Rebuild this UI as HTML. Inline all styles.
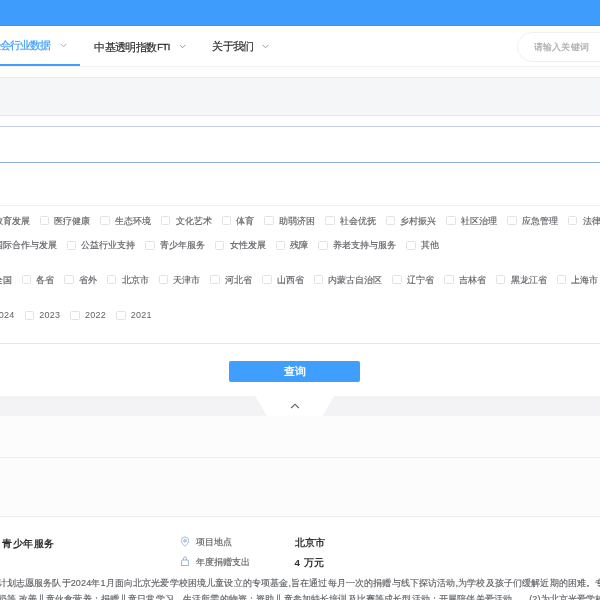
<!DOCTYPE html>
<html><head><meta charset="utf-8">
<style>
*{margin:0;padding:0;box-sizing:border-box}
html,body{width:600px;height:600px;overflow:hidden;background:#fff;font-family:"Liberation Sans",sans-serif;color:#303133}
body{filter:blur(0.3px)}
.abs{position:absolute}
#topbar{left:0;top:0;width:600px;height:25.8px;background:linear-gradient(#3e9cfd 24.5px,#3a90e8 25.8px)}
#nav{left:0;top:25.8px;width:600px;height:40.5px;background:#fff}
#navshadow{left:0;top:66px;width:600px;height:11px;background:linear-gradient(#efeff1,#fdfdfd 1.5px,#fefefe)}
.navi{font-size:10.5px;line-height:14px;letter-spacing:-0.6px;white-space:nowrap;color:#303133;-webkit-text-stroke:0.2px}
.chev{display:inline-block;width:4px;height:4px;border-right:1px solid #909399;border-bottom:1px solid #909399;transform:rotate(45deg);margin-left:9px;position:relative;top:-3px}
#underline{left:0;top:64.3px;width:80px;height:1.7px;background:#409eff}
#search{left:516.5px;top:31.7px;width:120px;height:30px;border:1px solid #efefef;border-radius:15px;background:#fff}
#search span{position:absolute;left:16px;top:8.2px;font-size:9.3px;line-height:12px;letter-spacing:0.3px;color:#a4a6ab;white-space:nowrap;-webkit-text-stroke:0.15px #a4a6ab}
#band1{left:0;top:77px;width:600px;height:38.5px;background:#f5f6f8;border-top:1px solid #ececee;border-bottom:1px solid #e6e6e8}
#input{left:-10px;top:126px;width:620px;height:37px;border:1px solid #c6d2ee;border-bottom-color:#8fb0d8;background:#fff}
.row{position:absolute;white-space:nowrap;font-size:9px;line-height:12px;color:#606266;display:flex;align-items:center;-webkit-text-stroke:0.15px #606266}
.cb{display:inline-flex;align-items:center;margin-right:10.02px}
.cb i{display:inline-block;width:9.5px;height:9px;border:1px solid #e0e2e7;border-radius:1.5px;margin-right:5.2px;background:#fff}
#sep{left:0;top:342.8px;width:600px;height:1px;background:#e6e6e9}
#btn{left:229.3px;top:361.3px;width:131.2px;height:20.3px;background:#409eff;border-radius:2px;color:#fff;font-weight:bold;font-size:10.5px;letter-spacing:-0.5px;text-align:center;line-height:20px}
#band2{left:0;top:395.6px;width:600px;height:20.2px;background:#f3f2f5}
#area{left:0;top:415.7px;width:600px;height:100.5px;background:#fcfcfd}
#line2{left:0;top:457px;width:600px;height:1px;background:#eeedf1}
#line3{left:0;top:515.7px;width:600px;height:1px;background:#eeedf1}
.t{position:absolute;white-space:nowrap}
</style></head><body>
<div id="topbar" class="abs"></div>
<div id="nav" class="abs"></div>
<div id="navshadow" class="abs"></div>
<div class="abs navi" style="left:-10.4px;top:38.2px;letter-spacing:-0.85px;color:#409eff;-webkit-text-stroke:0.2px #409eff">社会行业数据</div>
<svg class="abs" style="left:60px;top:43px" width="8" height="5"><polyline points="0.8,1 3.55,3.8 6.3,1" fill="none" stroke="#a0a4ac" stroke-width="0.9"/></svg>
<div class="abs navi" style="left:94.3px;top:39.5px">中基透明指数<span style="letter-spacing:-0.3px;font-size:9px;margin-left:0.6px;position:relative;top:-0.6px;-webkit-text-stroke:0.35px #303133">FTI</span></div>
<svg class="abs" style="left:179.3px;top:44px" width="8" height="5"><polyline points="0.8,1 3.55,3.8 6.3,1" fill="none" stroke="#8a8e96" stroke-width="0.9"/></svg>
<div class="abs navi" style="left:212.3px;top:39.4px">关于我们</div>
<svg class="abs" style="left:262px;top:43.8px" width="8" height="5"><polyline points="0.8,1 3.55,3.8 6.3,1" fill="none" stroke="#8a8e96" stroke-width="0.9"/></svg>
<div id="underline" class="abs"></div>
<div id="search" class="abs"><span>请输入关键词</span></div>
<div id="band1" class="abs"></div>
<div id="input" class="abs"></div>

<div class="row" style="left:-21.2px;top:214.6px">
<span class="cb"><i></i>教育发展</span><span class="cb"><i></i>医疗健康</span><span class="cb"><i></i>生态环境</span><span class="cb"><i></i>文化艺术</span><span class="cb"><i></i>体育</span><span class="cb"><i></i>助弱济困</span><span class="cb"><i></i>社会优抚</span><span class="cb"><i></i>乡村振兴</span><span class="cb"><i></i>社区治理</span><span class="cb"><i></i>应急管理</span><span class="cb"><i></i>法律服务</span>
</div>
<div class="row" style="left:-21.2px;top:239.2px">
<span class="cb"><i></i>国际合作与发展</span><span class="cb"><i></i>公益行业支持</span><span class="cb"><i></i>青少年服务</span><span class="cb"><i></i>女性发展</span><span class="cb"><i></i>残障</span><span class="cb"><i></i>养老支持与服务</span><span class="cb"><i></i>其他</span>
</div>
<div class="row" style="left:-21.2px;top:273.6px">
<span class="cb"><i></i>全国</span><span class="cb"><i></i>各省</span><span class="cb"><i></i>省外</span><span class="cb"><i></i>北京市</span><span class="cb"><i></i>天津市</span><span class="cb"><i></i>河北省</span><span class="cb"><i></i>山西省</span><span class="cb"><i></i>内蒙古自治区</span><span class="cb"><i></i>辽宁省</span><span class="cb"><i></i>吉林省</span><span class="cb"><i></i>黑龙江省</span><span class="cb"><i></i>上海市</span><span class="cb"><i></i>江苏省</span>
</div>
<div class="row" style="left:-21.2px;top:309.4px;letter-spacing:0.25px;-webkit-text-stroke:0">
<span class="cb"><i></i>2024</span><span class="cb"><i></i>2023</span><span class="cb"><i></i>2022</span><span class="cb"><i></i>2021</span>
</div>

<div id="sep" class="abs"></div>
<div class="abs" style="left:0;top:204.5px;width:600px;height:1px;background:#f0f0f2"></div>
<div id="btn" class="abs">查询</div>
<div id="band2" class="abs"></div>
<svg class="abs" style="left:0;top:395px" width="600" height="22"><polygon points="254.7,0 334.7,0 322.7,21 266.7,21" fill="#fff"/><polyline points="291.2,13 295,9.2 298.8,13" fill="none" stroke="#5f6268" stroke-width="1.15"/></svg>
<div id="area" class="abs"></div>
<div id="line2" class="abs"></div>
<div id="line3" class="abs"></div>

<div class="t" style="left:2.2px;top:538px;font-size:9.75px;line-height:12px;letter-spacing:0.5px;font-weight:bold;color:#303133">青少年服务</div>
<svg class="abs" style="left:180px;top:536px" width="10" height="12" viewBox="0 0 10 12"><path d="M5 10.3C3 8.4 1.3 6.6 1.3 4.6A3.7 3.7 0 0 1 8.7 4.6C8.7 6.6 7 8.4 5 10.3Z" fill="none" stroke="#8eaade" stroke-width="0.8"/><circle cx="5" cy="4.7" r="1.5" fill="#c0d0ee" stroke="#8eaade" stroke-width="0.6"/></svg>
<div class="t" style="left:196px;top:536px;font-size:9px;line-height:12px;color:#606266;-webkit-text-stroke:0.15px #606266">项目地点</div>
<div class="t" style="left:294.6px;top:537px;font-size:9.75px;line-height:12px;letter-spacing:0.2px;font-weight:bold;color:#303133">北京市</div>
<svg class="abs" style="left:180px;top:555px" width="10" height="12" viewBox="0 0 10 12"><path d="M1.8 5H8.2L8.7 10.5H1.3Z" fill="none" stroke="#8ea4dc" stroke-width="0.85" stroke-linejoin="round"/><path d="M3.5 5V3.6A1.5 1.6 0 0 1 6.5 3.6V5" fill="none" stroke="#8ea4dc" stroke-width="0.85"/></svg>
<div class="t" style="left:196px;top:555.5px;font-size:9px;line-height:12px;color:#606266;-webkit-text-stroke:0.15px #606266">年度捐赠支出</div>
<div class="t" style="left:294.6px;top:556.8px;font-size:9.75px;line-height:12px;letter-spacing:0.2px;font-weight:bold;color:#303133">4<span style="margin-left:3.5px">万元</span></div>
<div class="t" style="left:-2.4px;top:575.6px;font-size:9px;line-height:15px;letter-spacing:0.14px;color:#606266;-webkit-text-stroke:0.15px #606266">计划志愿服务队于2024年1月面向北京光爱学校困境儿童设立的专项基金,旨在通过每月一次的捐赠与线下探访活动,为学校及孩子们缓解近期的困难。专项基金</div>
<div class="t" style="left:-2.4px;top:592.4px;font-size:9px;line-height:15px;letter-spacing:0.14px;color:#606266;-webkit-text-stroke:0.15px #606266">奶等,改善儿童伙食营养；捐赠儿童日常学习、生活所需的物资；资助儿童参加特长培训及比赛等成长型活动；开展陪伴关爱活动。<span style="margin-left:8px">(2)</span>为北京光爱学校的孩子</div>
</body></html>
